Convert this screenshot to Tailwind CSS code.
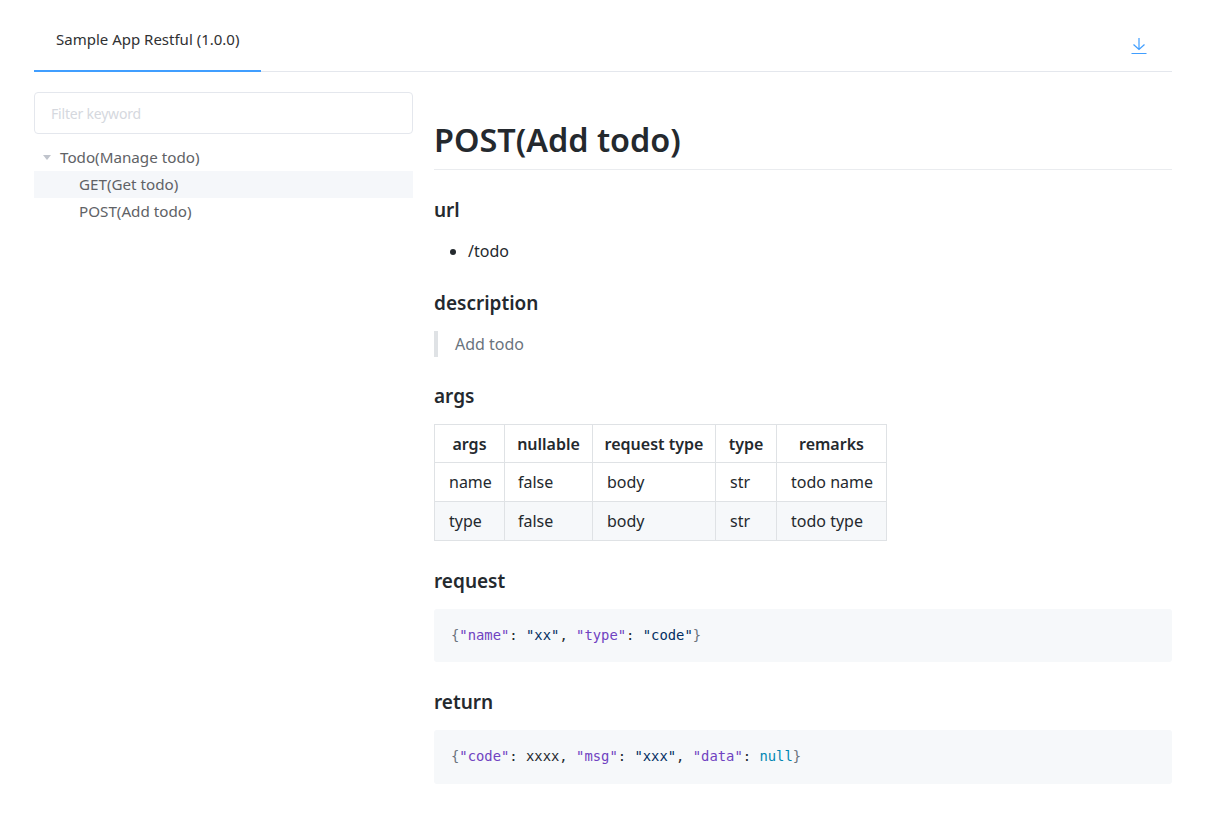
<!DOCTYPE html>
<html lang="en">
<head>
  <meta charset="UTF-8" />
  <title>Sample App Restful</title>
  <script src="https://cdn.jsdelivr.net/npm/@tailwindcss/browser@4"></script>
</head>
<body class="bg-white font-['Noto_Sans',sans-serif] text-[#24292e]">
  <div class="pl-[34px] w-[1172px] box-content">
    <!-- tabs -->
    <div class="h-[72px] border-b border-[#e4e7ed] flex items-start justify-between box-border w-[1138px]">
      <div class="w-[227px] h-[72px] border-b-2 border-[#409eff] pl-[22px] pt-[29px] text-[15px] leading-[20px] text-[#303133]">Sample App Restful (1.0.0)</div>
      <svg class="mt-[37px] mr-[24px]" width="18" height="18" viewBox="0 0 18 18" fill="none" stroke="#409eff" stroke-width="1.2">
        <path d="M9 1v11M3.500 7.500L9 12.500l5.500-5M1.500 16.500h15" />
      </svg>
    </div>

    <div class="flex w-[1138px]">
      <!-- sidebar -->
      <aside class="w-[379px] shrink-0 pt-[20px]">
        <input placeholder="Filter keyword" class="w-full h-[42px] border border-[#e4e7ed] rounded-[4px] px-[16px] text-[14px] tracking-[-0.2px] outline-none placeholder:text-[#d5d8de]" />
        <ul class="mt-[11px] text-[15.200px] text-[#606266]">
          <li class="h-[26px] flex items-center pl-[9px] pb-[1px]">
            <span class="w-0 h-0 border-x-[4px] border-x-transparent border-t-[5px] border-t-[#c0c4cc] mr-[9px]"></span>
            <span>Todo(Manage todo)</span>
          </li>
          <li class="h-[27px] flex items-center pl-[45px] bg-[#f5f7fa]">GET(Get todo)</li>
          <li class="h-[27px] flex items-center pl-[45px]">POST(Add todo)</li>
        </ul>
      </aside>

      <!-- content -->
      <main class="flex-1 pl-[21px]">
        <h1 class="mt-[45px] text-[32.400px] leading-[44px] font-semibold pb-[8px] border-b border-[#eaecef]">POST(Add todo)</h1>
        <h3 class="mt-[24px] text-[19px] leading-[32px] font-semibold">url</h3>
        <ul class="mt-[11px] pl-[34px] list-disc text-[16px] leading-[28px]"><li>/todo</li></ul>
        <h3 class="mt-[22px] text-[19px] leading-[32px] font-semibold">description</h3>
        <blockquote class="mt-[12px] border-l-4 border-[#dfe2e5] pl-[17px] text-[16px] leading-[26px] text-[#6a737d]">Add todo</blockquote>
        <h3 class="mt-[23px] text-[19px] leading-[32px] font-semibold">args</h3>
        <table class="mt-[12px] border-collapse table-fixed w-[452px] text-[16px] leading-[24px] whitespace-nowrap">
          <thead>
            <tr>
              <th class="border border-[#dfe2e5] pt-[7px] pb-[6px] font-semibold w-[70px]">args</th>
              <th class="border border-[#dfe2e5] pt-[7px] pb-[6px] font-semibold w-[88px]">nullable</th>
              <th class="border border-[#dfe2e5] pt-[7px] pb-[6px] font-semibold w-[123px]">request type</th>
              <th class="border border-[#dfe2e5] pt-[7px] pb-[6px] font-semibold w-[61px]">type</th>
              <th class="border border-[#dfe2e5] pt-[7px] pb-[6px] font-semibold w-[110px]">remarks</th>
            </tr>
          </thead>
          <tbody>
            <tr>
              <td class="border border-[#dfe2e5] px-[14px] py-[7px]">name</td>
              <td class="border border-[#dfe2e5] pl-[13px] pr-[14px] py-[7px]">false</td>
              <td class="border border-[#dfe2e5] px-[14px] py-[7px]">body</td>
              <td class="border border-[#dfe2e5] px-[14px] py-[7px]">str</td>
              <td class="border border-[#dfe2e5] px-[14px] py-[7px]">todo name</td>
            </tr>
            <tr class="bg-[#f6f8fa]">
              <td class="border border-[#dfe2e5] px-[14px] py-[7px]">type</td>
              <td class="border border-[#dfe2e5] pl-[13px] pr-[14px] py-[7px]">false</td>
              <td class="border border-[#dfe2e5] px-[14px] py-[7px]">body</td>
              <td class="border border-[#dfe2e5] px-[14px] py-[7px]">str</td>
              <td class="border border-[#dfe2e5] px-[14px] py-[7px]">todo type</td>
            </tr>
          </tbody>
        </table>
        <h3 class="mt-[24px] text-[19px] leading-[32px] font-semibold">request</h3>
        <pre class="mt-[12px] h-[53px] bg-[#f6f8fa] rounded-[3px] px-[17px] py-[15px] font-['DejaVu_Sans_Mono',monospace] text-[13.850px] leading-[23px]"><span class="text-[#6a737d]">{</span><span class="text-[#6f42c1]">"name"</span>: <span class="text-[#032f62]">"xx"</span>, <span class="text-[#6f42c1]">"type"</span>: <span class="text-[#032f62]">"code"</span><span class="text-[#6a737d]">}</span></pre>
        <h3 class="mt-[24px] text-[19px] leading-[32px] font-semibold">return</h3>
        <pre class="mt-[12px] h-[54px] bg-[#f6f8fa] rounded-[3px] px-[17px] py-[15px] font-['DejaVu_Sans_Mono',monospace] text-[13.850px] leading-[23px]"><span class="text-[#6a737d]">{</span><span class="text-[#6f42c1]">"code"</span>: xxxx, <span class="text-[#6f42c1]">"msg"</span>: <span class="text-[#032f62]">"xxx"</span>, <span class="text-[#6f42c1]">"data"</span>: <span class="text-[#0086b3]">null</span><span class="text-[#6a737d]">}</span></pre>
      </main>
    </div>
  </div>
</body>
</html>
